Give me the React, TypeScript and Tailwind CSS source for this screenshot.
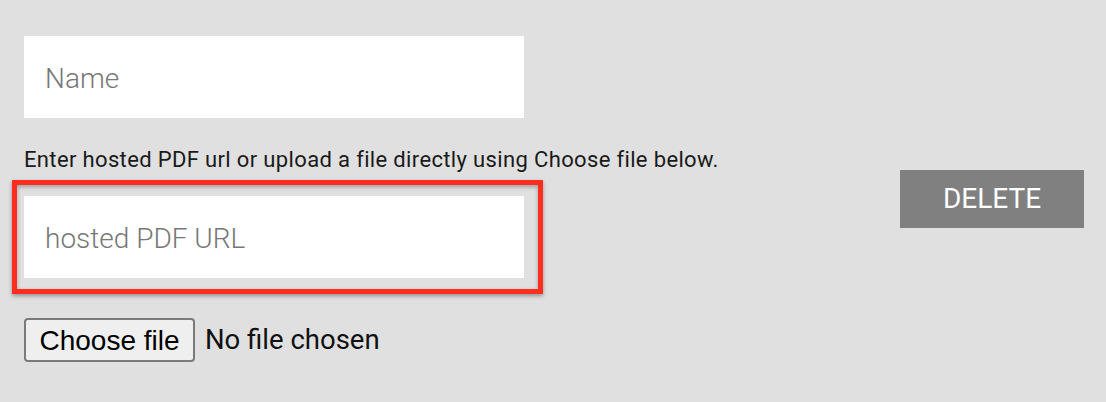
import React from "react";

export default function App() {
  const roboto = { fontFamily: "Roboto, 'Noto Sans', sans-serif" };
  return (
    <div className="w-[1106px] h-[402px] bg-[#e0e0e0] overflow-hidden" style={roboto}>
      <div className="flex items-center justify-between pl-[24px] pr-[22px] pt-[36px]">
        <div className="flex flex-col w-[500px]">
          <div className="h-[82px] bg-white flex items-center pl-[21px] pt-[3px] text-[28px] font-light text-[#777]">
            Name
          </div>
          <div className="mt-[30px] h-[24px] leading-[24px] text-[22px] tracking-[0.35px] text-[#1a1a1a] whitespace-nowrap">
            Enter hosted PDF url or upload a file directly using Choose file below.
          </div>
          <div className="relative mt-[24px]">
            <div className="h-[82px] bg-white flex items-center pl-[21px] pt-[3px] text-[28px] font-light text-[#777]">
              hosted PDF URL
            </div>
            <div className="absolute left-[-12px] top-[-16px] w-[531px] h-[114px] border-[5px] border-[#fd2d20] shadow-[0_2px_4px_rgba(0,0,0,0.35),inset_0_2px_4px_rgba(0,0,0,0.3)] pointer-events-none" />
          </div>
          <div className="mt-[40px] flex items-center gap-[10px]">
            <button
              className="w-[171px] h-[44px] rounded-[4px] border-2 border-[#7a7a7a] bg-[#efefef] text-[28px] text-black flex items-center justify-center pt-[1px]"
              style={{ fontFamily: "'Liberation Sans', Arial, sans-serif" }}
            >
              Choose file
            </button>
            <span className="text-[27.5px] text-[#111]">No file chosen</span>
          </div>
        </div>
        <button className="w-[184px] h-[58px] bg-[#808080] text-white text-[28px] flex items-center justify-center">
          DELETE
        </button>
      </div>
    </div>
  );
}
